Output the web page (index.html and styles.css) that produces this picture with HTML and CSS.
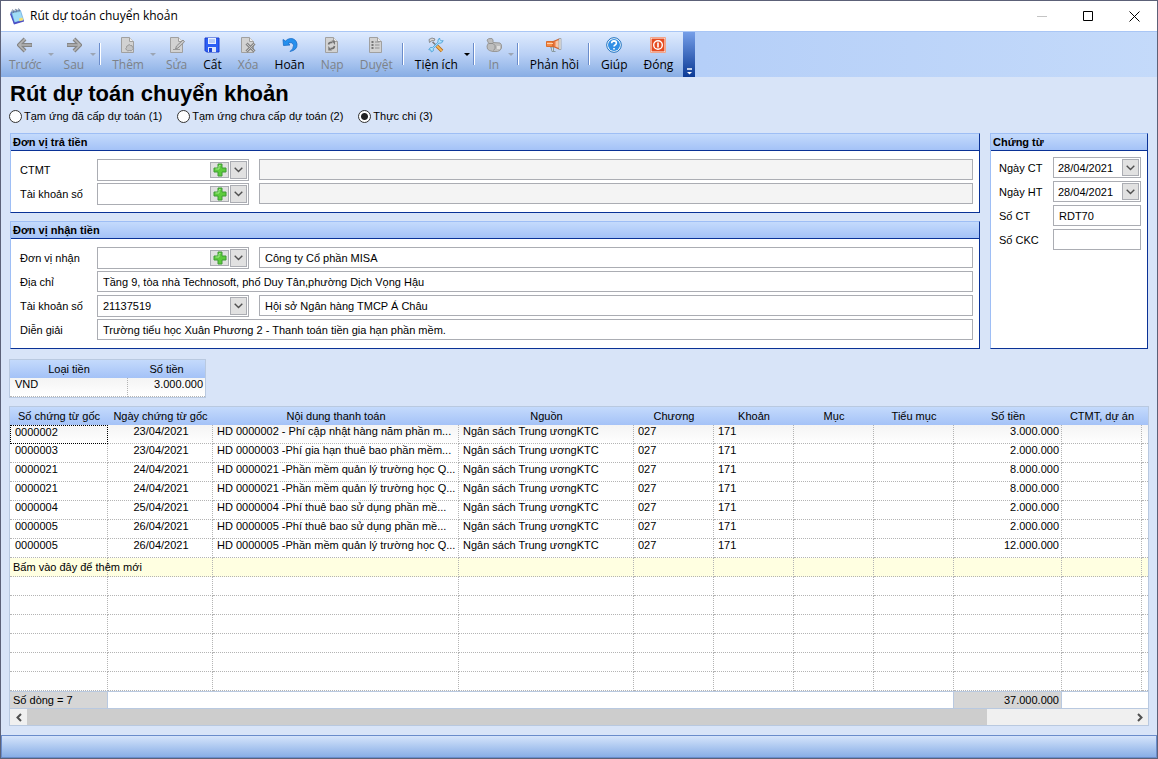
FILE: index.html
```html
<!DOCTYPE html>
<html lang="vi">
  <head>
    <meta charset="UTF-8" />
    <meta name="viewport" content="width=device-width, initial-scale=1.0" />
    <title>Rút dự toán chuyển khoản</title>
    <link rel="stylesheet" href="styles.css">
  </head>
  <body>
    <!-- shared icons -->
    <svg class="defs" width="0" height="0" aria-hidden="true">
      <symbol id="chevron" viewBox="0 0 9 6">
        <path d="M.7.8 4.5 4.6 8.3.8" fill="none" stroke="#505050" stroke-width="1.4" />
      </symbol>
      <symbol id="plus" viewBox="0 0 14 14">
        <path d="M5 1h4v4h4v4H9v4H5V9H1V5h4z" fill="#5ccb3c" stroke="#3f9a35" stroke-width="1" />
        <path d="M6 2.5h1.5M6 3v3H2.5" fill="none" stroke="#a4ea8c" stroke-width="1" />
      </symbol>
      <symbol id="page" viewBox="0 0 16 16">
        <path d="M1.500.5h8l4 4v11h-12z" fill="#d2d2d2" stroke="#a0a0a0" />
        <path d="M9.500.5v4h4" fill="#eee" stroke="#a0a0a0" />
      </symbol>
    </svg>

    <div class="window">
      <header class="titlebar">
        <svg class="app-icon" width="16" height="17" viewBox="0 0 16 17">
          <path d="M1.500 4 11 2l3 11-9 3z" fill="#3c6fd6" />
          <path d="M2.500 4.500 11.500 2.500l3 9.500-9 2.500z" fill="#9fdcf6" stroke="#5b9ad8" stroke-width=".6" />
          <path d="M2 5l3.500 9.500 9.500-2.500v1.500l-10 3L1 6z" fill="#4d4fc4" />
          <path d="M10 10.500l3.500-1 .8 2.700-3.800 1z" fill="#f3df73" />
          <path d="M3 5.500V2.500q1-1.500 1.500 0v2.500M6 4.800V1.800q1-1.500 1.500 0v2.500M9 4.200V1.500q1-1.500 1.500 0v2" fill="none" stroke="#667b96" stroke-width=".9" />
        </svg>
        <span class="caption">Rút dự toán chuyển khoản</span>
        <div class="window-buttons">
          <button type="button" aria-label="Thu nhỏ" disabled><svg width="11" height="11"><path d="M0 5.500h10" stroke="#c4c4c4" /></svg></button>
          <button type="button" aria-label="Phóng to"><svg width="11" height="11"><path d="M.5.5h9v9h-9z" fill="none" stroke="#000" /></svg></button>
          <button type="button" aria-label="Đóng cửa sổ"><svg width="11" height="11"><path d="M.5.5l10 10M10.500.5l-10 10" stroke="#000" /></svg></button>
        </div>
      </header>

      <div class="toolbar-strip">
        <nav class="toolbar">
          <button type="button" class="tool drop" disabled>
            <svg width="16" height="16" viewBox="0 0 16 16"><path d="M8 2 2 8l6 6M2.500 8H15" fill="none" stroke="#858585" stroke-width="4" /><path d="M8 2 2 8l6 6M2.500 8H14.500" fill="none" stroke="#b4b4b4" stroke-width="1.600" /></svg>
            <span>Trước</span>
          </button>
          <button type="button" class="tool drop" disabled>
            <svg width="16" height="16" viewBox="0 0 16 16"><path d="M8 2l6 6-6 6M13.500 8H1" fill="none" stroke="#858585" stroke-width="4" /><path d="M8 2l6 6-6 6M13.500 8H1.500" fill="none" stroke="#b4b4b4" stroke-width="1.600" /></svg>
            <span>Sau</span>
          </button>
          <span class="separator"></span>
          <button type="button" class="tool drop" disabled>
            <svg width="16" height="16" viewBox="0 0 16 16"><use href="#page" /><path d="M8 8.500q1-2 2.500 0 2-.5 2 1.500 2 1 0 2.500-1 2-3 1-2 1-3-.5-1.500-1.500 0-2.500-.5-1.500 1.500-2z" fill="#c4c4c4" stroke="#8c8c8c" stroke-width=".8" /></svg>
            <span>Thêm</span>
          </button>
          <button type="button" class="tool" disabled>
            <svg width="16" height="16" viewBox="0 0 16 16"><use href="#page" /><path d="M6.500 12l1-3L14 3l1.500 1.800L9 11z" fill="#c9c9c9" stroke="#8d8d8d" /><path d="M4 12.500h7" stroke="#999" /></svg>
            <span>Sửa</span>
          </button>
          <button type="button" class="tool">
            <svg width="16" height="16" viewBox="0 0 16 16"><path d="M1 1h14v14H2.500L1 13.500z" fill="#2c5ff5" stroke="#1a3ccc" /><path d="M4 1h8v6H4z" fill="#e8f1ff" /><path d="M5 3h6M5 5h6" stroke="#85a4ed" /><path d="M4 10h8v5H4z" fill="#dbe4fb" /><path d="M5 11h3v4H5z" fill="#1d44d2" /></svg>
            <span>Cất</span>
          </button>
          <button type="button" class="tool" disabled>
            <svg width="16" height="16" viewBox="0 0 16 16"><use href="#page" /><path d="M6.500 6.500l8 8M14.500 6.500l-8 8" stroke="#858585" stroke-width="3" /><path d="M6.500 6.500l8 8M14.500 6.500l-8 8" stroke="#c4c4c4" stroke-width="1" /></svg>
            <span>Xóa</span>
          </button>
          <button type="button" class="tool">
            <svg width="16" height="16" viewBox="0 0 16 16"><path d="M1 2.500 1.500 8.500 8 8 6 6.200Q11 4.500 11.500 8.500 11.500 12 8 14.500 15.500 13 15 7 14 1.500 8.500 1.500 5.500 1.800 3.500 4z" fill="#2590ee" stroke="#1b6cc6" stroke-width=".8" /></svg>
            <span>Hoãn</span>
          </button>
          <button type="button" class="tool" disabled>
            <svg width="16" height="16" viewBox="0 0 16 16"><use href="#page" /><path d="M4.500 7.500Q5 5 8.500 5.500M10.500 9Q10 12 6.500 11.500" fill="none" stroke="#707070" stroke-width="1.600" /><path d="M7.500 3.500H11V8zM8 13.500H4.300V9z" fill="#777" /></svg>
            <span>Nạp</span>
          </button>
          <button type="button" class="tool" disabled>
            <svg width="16" height="16" viewBox="0 0 16 16"><use href="#page" /><path d="M3.500 5h2M3.500 8h2M3.500 11h2" stroke="#777" stroke-width="2" /><path d="M7 5h4.500M7 8h4.500M7 11h4.500" stroke="#929292" /></svg>
            <span>Duyệt</span>
          </button>
          <span class="separator"></span>
          <button type="button" class="tool drop">
            <svg width="16" height="16" viewBox="0 0 16 16"><path d="M4.500 5 8 8" stroke="#777" stroke-width="1.500" /><path d="M1.500 5.500 1 2.500 4 1l3 1-1 2-2-.5z" fill="#d8d8d8" stroke="#777" stroke-width=".8" /><path d="M9 9l5 5" stroke="#b66b19" stroke-width="3.600" /><path d="M9 9l4.800 4.800" stroke="#f6b757" stroke-width="1.800" /><path d="M11.500 1 10 3v2.200L4.500 10.500l-2.300.2-1.400 2 2 .2.500 2 2-1V11.500L11 6.200l2.500-.2 1.700-2.300-2.200.2-1-1.200z" fill="#b3e6ff" stroke="#429bd2" stroke-width=".8" /></svg>
            <span>Tiện ích</span>
          </button>
          <span class="separator"></span>
          <button type="button" class="tool drop" disabled>
            <svg width="16" height="16" viewBox="0 0 16 16"><path d="M1 3q1-2 5-1.500 1.500 1 1 4l7 .5q2 1 1.500 5-1 3-4 3.500H7Q3 14 1.500 12 0 9 2.500 6z" fill="#bdbdbd" stroke="#989898" /><path d="M3 6.500q5-1 6 2t-1.500 5" fill="none" stroke="#8e8e8e" /><path d="M11 9h3v3h-3z" fill="#ddd" /></svg>
            <span>In</span>
          </button>
          <span class="separator"></span>
          <button type="button" class="tool">
            <svg width="16" height="16" viewBox="0 0 16 16"><path d="M4 10h3.500v4.500h2M5 10l1 4.500h3" fill="#d6e4eb" stroke="#8999a1" /><path d="M.5 4.500H7v5H.5z" fill="#f68b46" stroke="#d96d2d" /><path d="M7 4.500 13 2v10L7 9.500z" fill="#ef7a3f" stroke="#c85823" stroke-width=".8" /><path d="M9.500 4.500 13 3v8L9.500 9.500z" fill="#f5c9ab" /><path d="M13 1.500h2v11h-2z" fill="#eee" stroke="#929292" stroke-width=".7" /><path d="M1 6.500h6" stroke="#ffd0a8" /></svg>
            <span>Phản hồi</span>
          </button>
          <span class="separator"></span>
          <button type="button" class="tool">
            <svg width="16" height="16" viewBox="0 0 16 16"><circle cx="8" cy="8" r="7.300" fill="#fff" stroke="#1a6fbd" /><circle cx="8" cy="8" r="6" fill="#338fe5" /><path d="M5.600 6.300Q5.700 3.900 8 3.900q2.400.1 2.400 2.200 0 1.200-1.300 1.900Q8 8.600 8 9.600M8 10.900v1.600" fill="none" stroke="#fff" stroke-width="1.600" /></svg>
            <span>Giúp</span>
          </button>
          <button type="button" class="tool">
            <svg width="16" height="16" viewBox="0 0 16 16"><path d="M.5.5h15v15H.5z" fill="#fff" stroke="#f0a58b" /><path d="M1.500 1.500h13v13h-13z" fill="#e54b20" /><circle cx="8" cy="8" r="4.300" fill="none" stroke="#fff" stroke-width="1.400" /><path d="M8 5.500v5" stroke="#fff" stroke-width="1.600" /></svg>
            <span>Đóng</span>
          </button>
          <button type="button" class="overflow" aria-label="Tùy chọn thanh công cụ">
            <svg width="7" height="8" viewBox="0 0 7 8"><path d="M1 1h5" stroke="#fff" stroke-width="1.500" /><path d="M1 4h5L3.500 6.500z" fill="#fff" /></svg>
          </button>
        </nav>
      </div>

      <main>
        <h1>Rút dự toán chuyển khoản</h1>
        <div class="kinds">
          <label><input type="radio" name="kind">Tạm ứng đã cấp dự toán (1)</label>
          <label><input type="radio" name="kind">Tạm ứng chưa cấp dự toán (2)</label>
          <label><input type="radio" name="kind" checked>Thực chi (3)</label>
        </div>

        <div class="groups">
          <div class="column">
            <section class="group">
              <h2>Đơn vị trả tiền</h2>
              <div class="fields">
                <label for="ctmt">CTMT</label>
                <div class="combo">
                  <select id="ctmt"><option></option></select>
                  <button type="button" class="add" aria-label="Thêm CTMT"><svg width="14" height="14"><use href="#plus" /></svg></button>
                  <button type="button" class="arrow" aria-label="Mở danh sách"><svg width="9" height="6"><use href="#chevron" /></svg></button>
                </div>
                <input type="text" aria-label="Tên CTMT" disabled>

                <label for="payAccount">Tài khoản số</label>
                <div class="combo">
                  <select id="payAccount"><option></option></select>
                  <button type="button" class="add" aria-label="Thêm tài khoản"><svg width="14" height="14"><use href="#plus" /></svg></button>
                  <button type="button" class="arrow" aria-label="Mở danh sách"><svg width="9" height="6"><use href="#chevron" /></svg></button>
                </div>
                <input type="text" aria-label="Tên ngân hàng trả" disabled>
              </div>
            </section>

            <section class="group">
              <h2>Đơn vị nhận tiền</h2>
              <div class="fields">
                <label for="receiver">Đơn vị nhận</label>
                <div class="combo">
                  <select id="receiver"><option></option></select>
                  <button type="button" class="add" aria-label="Thêm đơn vị"><svg width="14" height="14"><use href="#plus" /></svg></button>
                  <button type="button" class="arrow" aria-label="Mở danh sách"><svg width="9" height="6"><use href="#chevron" /></svg></button>
                </div>
                <input type="text" aria-label="Tên đơn vị nhận" value="Công ty Cổ phần MISA">

                <label for="address">Địa chỉ</label>
                <input type="text" id="address" class="wide" value="Tầng 9, tòa nhà Technosoft, phố Duy Tân,phường Dịch Vọng Hậu">

                <label for="account">Tài khoản số</label>
                <div class="combo">
                  <select id="account"><option>21137519</option></select>
                  <button type="button" class="arrow" aria-label="Mở danh sách"><svg width="9" height="6"><use href="#chevron" /></svg></button>
                </div>
                <input type="text" aria-label="Tên ngân hàng nhận" value="Hội sở Ngân hàng TMCP Á Châu">

                <label for="note">Diễn giải</label>
                <input type="text" id="note" class="wide" value="Trường tiểu học Xuân Phương 2 - Thanh toán tiền gia hạn phần mềm.">
              </div>
            </section>
          </div>

          <section class="group">
            <h2>Chứng từ</h2>
            <div class="fields voucher">
              <label for="voucherDate">Ngày CT</label>
              <div class="combo">
                <select id="voucherDate"><option>28/04/2021</option></select>
                <button type="button" class="arrow" aria-label="Mở lịch"><svg width="9" height="6"><use href="#chevron" /></svg></button>
              </div>
              <label for="postDate">Ngày HT</label>
              <div class="combo">
                <select id="postDate"><option>28/04/2021</option></select>
                <button type="button" class="arrow" aria-label="Mở lịch"><svg width="9" height="6"><use href="#chevron" /></svg></button>
              </div>
              <label for="voucherNo">Số CT</label>
              <input type="text" id="voucherNo" value="RDT70">
              <label for="ckcNo">Số CKC</label>
              <input type="text" id="ckcNo">
            </div>
          </section>
        </div>

        <div class="grid currency">
          <table>
            <thead>
              <tr><th class="c-type">Loại tiền</th><th>Số tiền</th></tr>
            </thead>
            <tbody>
              <tr class="current"><td>VND</td><td class="num">3.000.000</td></tr>
            </tbody>
          </table>
        </div>

        <div class="grid details">
          <table>
            <thead>
              <tr>
                <th class="c-no">Số chứng từ gốc</th>
                <th class="c-date">Ngày chứng từ gốc</th>
                <th class="c-text">Nội dung thanh toán</th>
                <th class="c-source">Nguồn</th>
                <th class="c-code">Chương</th>
                <th class="c-code">Khoản</th>
                <th class="c-code">Mục</th>
                <th class="c-code">Tiểu mục</th>
                <th class="c-amount">Số tiền</th>
                <th class="c-code">CTMT, dự án</th>
                <th></th>
              </tr>
            </thead>
            <tbody>
              <tr class="current"><td class="focused">0000002</td><td class="date">23/04/2021</td><td class="text">HD 0000002 - Phí cập nhật hàng năm phần m...</td><td>Ngân sách Trung ươngKTC</td><td>027</td><td>171</td><td></td><td></td><td class="num">3.000.000</td><td></td><td></td></tr>
              <tr><td>0000003</td><td class="date">23/04/2021</td><td class="text">HD 0000003 -Phí gia hạn thuê bao phần mềm...</td><td>Ngân sách Trung ươngKTC</td><td>027</td><td>171</td><td></td><td></td><td class="num">2.000.000</td><td></td><td></td></tr>
              <tr><td>0000021</td><td class="date">24/04/2021</td><td class="text">HD 0000021 -Phần mềm quản lý trường học Q...</td><td>Ngân sách Trung ươngKTC</td><td>027</td><td>171</td><td></td><td></td><td class="num">8.000.000</td><td></td><td></td></tr>
              <tr><td>0000021</td><td class="date">24/04/2021</td><td class="text">HD 0000021 -Phần mềm quản lý trường học Q...</td><td>Ngân sách Trung ươngKTC</td><td>027</td><td>171</td><td></td><td></td><td class="num">8.000.000</td><td></td><td></td></tr>
              <tr><td>0000004</td><td class="date">25/04/2021</td><td class="text">HD 0000004 -Phí thuê bao sử dụng phần mề...</td><td>Ngân sách Trung ươngKTC</td><td>027</td><td>171</td><td></td><td></td><td class="num">2.000.000</td><td></td><td></td></tr>
              <tr><td>0000005</td><td class="date">26/04/2021</td><td class="text">HD 0000005 -Phí thuê bao sử dụng phần mề...</td><td>Ngân sách Trung ươngKTC</td><td>027</td><td>171</td><td></td><td></td><td class="num">2.000.000</td><td></td><td></td></tr>
              <tr><td>0000005</td><td class="date">26/04/2021</td><td class="text">HD 0000005 -Phần mềm quản lý trường học Q...</td><td>Ngân sách Trung ươngKTC</td><td>027</td><td>171</td><td></td><td></td><td class="num">12.000.000</td><td></td><td></td></tr>
              <tr class="new-row"><td>Bấm vào đây để thêm mới</td><td></td><td></td><td></td><td></td><td></td><td></td><td></td><td></td><td></td><td></td></tr>
              <tr><td></td><td></td><td></td><td></td><td></td><td></td><td></td><td></td><td></td><td></td><td></td></tr>
              <tr><td></td><td></td><td></td><td></td><td></td><td></td><td></td><td></td><td></td><td></td><td></td></tr>
              <tr><td></td><td></td><td></td><td></td><td></td><td></td><td></td><td></td><td></td><td></td><td></td></tr>
              <tr><td></td><td></td><td></td><td></td><td></td><td></td><td></td><td></td><td></td><td></td><td></td></tr>
              <tr><td></td><td></td><td></td><td></td><td></td><td></td><td></td><td></td><td></td><td></td><td></td></tr>
              <tr><td></td><td></td><td></td><td></td><td></td><td></td><td></td><td></td><td></td><td></td><td></td></tr>
            </tbody>
            <tfoot>
              <tr><td class="sum">Số dòng = 7</td><td colspan="7"></td><td class="sum num">37.000.000</td><td colspan="2"></td></tr>
            </tfoot>
          </table>
          <div class="scrollbar">
            <button type="button" aria-label="Cuộn trái"><svg width="8" height="9" viewBox="0 0 8 9"><path d="M6 1 2.500 4.500 6 8" fill="none" stroke="#505050" stroke-width="2" /></svg></button>
            <div class="track"><div class="thumb"></div></div>
            <button type="button" aria-label="Cuộn phải"><svg width="8" height="9" viewBox="0 0 8 9"><path d="M2 1l3.500 3.500L2 8" fill="none" stroke="#505050" stroke-width="2" /></svg></button>
          </div>
        </div>
      </main>

      <footer class="statusbar"></footer>
    </div>
  </body>
</html>
```
FILE: styles.css
```css
* {
  box-sizing: border-box;
}
body {
  margin: 0;
  font-family: "Liberation Sans", Arial, sans-serif;
  font-size: 11px;
  line-height: 14px;
  color: #000;
}
button,
input,
select {
  margin: 0;
  padding: 0;
  border: none;
  border-radius: 0;
  background: none;
  font: inherit;
  color: inherit;
}
svg {
  display: block;
}
.defs {
  position: absolute;
}
.window {
  display: flex;
  flex-direction: column;
  min-height: 100vh;
  background: #d8e4f8;
  border: 1px solid #5c6178;
}

/* Title bar */
.titlebar {
  display: flex;
  align-items: center;
  height: 30px;
  padding-left: 8px;
  background: #fff;
  font-family: "Open Sans", "Noto Sans", sans-serif;
  font-size: 12px;
}
.caption {
  margin-left: 5px;
}
.window-buttons {
  display: flex;
  margin-left: auto;
}
.window-buttons button {
  display: flex;
  justify-content: center;
  width: 46px;
}

/* Toolbar */
.toolbar-strip {
  display: flex;
  height: 46px;
  background: linear-gradient(to right, #9ebef5, #c4dafa);
  border-top: 1px solid #a9c6f5;
}
.toolbar {
  display: flex;
  background: linear-gradient(#dfebfe, #b9d0f5 50%, #87ade4);
  font-family: "Open Sans", "Noto Sans", sans-serif;
  font-size: 12px;
}
.tool {
  position: relative;
  display: flex;
  flex-direction: column;
  align-items: center;
  gap: 4px;
  padding: 5px 8px 0;
  line-height: 16px;
}
.tool:disabled {
  color: #7d8288;
}
.tool.drop {
  padding-right: 14px;
}
.tool.drop::after {
  content: "";
  position: absolute;
  right: 2px;
  top: 21px;
  border: 3px solid transparent;
  border-top-color: #000;
  border-bottom: none;
}
.tool.drop:disabled::after {
  border-top-color: #9ba5b5;
}
.separator {
  width: 2px;
  height: 22px;
  margin: 11px 3px 0 1px;
  background: linear-gradient(to right, #6a8ccb 50%, #fff 50%);
}
.overflow {
  display: flex;
  align-items: flex-end;
  justify-content: center;
  width: 12px;
  margin-left: 2px;
  padding-bottom: 1px;
  background: linear-gradient(#759ee8, #0b3a96);
}

/* Form */
main {
  flex: 1;
  padding: 3px 8px 8px;
}
h1 {
  margin: 0 0 0 1px;
  font-size: 22px;
  line-height: 28px;
}
.kinds {
  display: flex;
  gap: 15px;
  padding: 1px 0 10px;
}
.kinds label {
  display: flex;
  align-items: center;
  gap: 2px;
}
.kinds input {
  appearance: none;
  width: 13px;
  height: 13px;
  border: 1px solid #333;
  border-radius: 50%;
  background: #fff;
}
.kinds input:checked {
  background: radial-gradient(circle, #222 3px, #fff 4px);
}
.groups {
  display: grid;
  grid-template-columns: 1fr 158px;
  gap: 10px;
  margin: 0 1px;
}
.column {
  display: flex;
  flex-direction: column;
  gap: 8px;
}
.group {
  background: #fff;
  border: 1px solid #0a3296;
  border-top-color: #9ebef5;
  border-left-color: #9ebef5;
}
.group h2 {
  margin: 0;
  padding: 1px 2px;
  border-bottom: 1px solid #0a3296;
  background: linear-gradient(#c4dafc, #a4c2f7);
  font-size: 11px;
  line-height: 14px;
}
.fields {
  display: grid;
  grid-template-columns: 77px 152px 1fr;
  grid-auto-rows: 22px;
  row-gap: 2px;
  padding: 8px 6px 7px 9px;
}
.fields > label {
  align-self: center;
  white-space: nowrap;
}
.combo + input {
  margin-left: 10px;
}
.fields > input {
  min-width: 0;
  height: 21px;
  padding: 0 5px;
  border: 1px solid #abadb3;
  background: #fff;
}
.fields > input:disabled {
  background: #f4f4f4;
}
.fields > .wide {
  grid-column: 2 / 4;
}
.fields.voucher {
  grid-template-columns: 1fr 88px;
  padding: 6px 6px 6px 8px;
}
.combo {
  display: flex;
  gap: 1px;
  padding: 1px;
  border: 1px solid #abadb3;
  background: #fff;
}
.voucher .combo {
  height: 21px;
}
.combo select {
  appearance: none;
  flex: 1;
  min-width: 0;
  padding-left: 4px;
}
.voucher select {
  padding-left: 3px;
}
.combo button {
  display: flex;
  align-items: center;
  justify-content: center;
  border: 1px solid #abadb3;
  background: #e1e1e1;
}
.combo .add {
  width: 19px;
  margin: 1px 0;
}
.combo .arrow {
  width: 17px;
}

/* Grids */
.grid {
  border: 1px solid #b9c9e0;
  background: #fff;
}
.currency {
  width: 197px;
  margin-top: 10px;
}
.details {
  margin-top: 8px;
}
table {
  width: 100%;
  table-layout: fixed;
  border-collapse: separate;
  border-spacing: 0;
}
th {
  height: 18px;
  padding: 0;
  font-weight: normal;
  white-space: nowrap;
}
thead {
  background: linear-gradient(#c4dafc, #a4c2f7);
}
td {
  height: 19px;
  padding: 0 2px 5px 4px;
  border-right: 1px dotted #b4b4b4;
  border-bottom: 1px dotted #b4b4b4;
  line-height: 13px;
  white-space: nowrap;
}
td:first-child {
  padding-left: 5px;
}
td:last-child {
  border-right: none;
}
.c-type {
  width: 118px;
}
.c-no {
  width: 98px;
}
.c-date {
  width: 105px;
}
.c-text {
  width: 246px;
}
.c-source {
  width: 175px;
}
.c-code {
  width: 80px;
}
.c-amount {
  width: 108px;
}
.current {
  background: linear-gradient(#f4f4f4, #fff);
}
td.focused {
  border: 1px dotted #000;
  padding: 0 2px 4px 4px;
}
.date {
  text-align: center;
}
.text {
  overflow: hidden;
}
.num {
  text-align: right;
}
.new-row {
  background: #ffffe1;
}
.new-row td:first-child {
  padding: 0 0 0 3px;
}
tfoot td,
tfoot td:first-child {
  height: 18px;
  padding: 0 2px 0 3px;
  border-top: 1px solid #b9c9e0;
  border-right: 1px solid #b9c9e0;
  border-bottom: 1px solid #b9c9e0;
}
.sum {
  background: #d6d6d6;
}
.scrollbar {
  display: flex;
  height: 16px;
  background: #f0f0f0;
}
.scrollbar button {
  display: flex;
  align-items: center;
  justify-content: center;
  width: 17px;
}
.track {
  flex: 1;
}
.thumb {
  width: 87%;
  height: 100%;
  background: #cdcdcd;
}

.statusbar {
  height: 23px;
  border: 1px solid #6a8ccb;
  background: linear-gradient(#d5e4fb, #88aee6);
}
```
